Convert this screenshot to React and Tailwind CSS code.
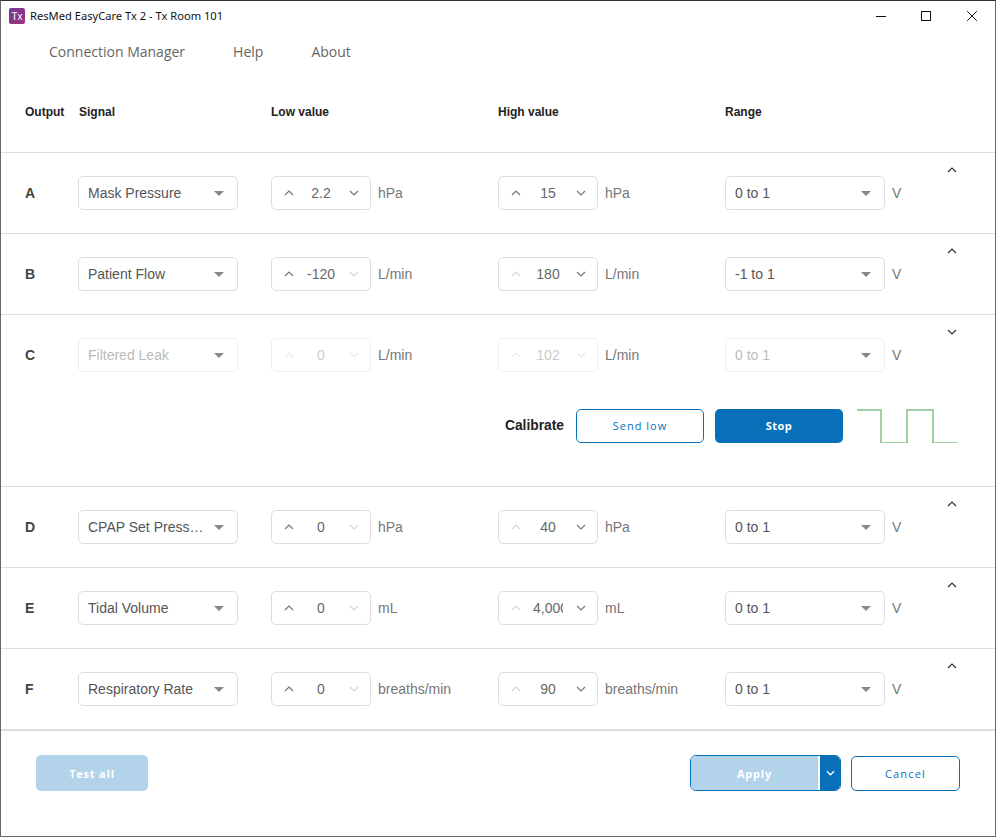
import React from 'react';

const rows = [
  { id: 'A', signal: 'Mask Pressure', low: '2.2', high: '15', unit: 'hPa', range: '0 to 1', lowUp: true, lowDown: true, highUp: true, highDown: true },
  { id: 'B', signal: 'Patient Flow', low: '-120', high: '180', unit: 'L/min', range: '-1 to 1', lowUp: true, lowDown: false, highUp: false, highDown: true },
  { id: 'C', signal: 'Filtered Leak', low: '0', high: '102', unit: 'L/min', range: '0 to 1', lowUp: false, lowDown: false, highUp: false, highDown: false, disabled: true, open: true },
  { id: 'D', signal: 'CPAP Set Pressure', low: '0', high: '40', unit: 'hPa', range: '0 to 1', lowUp: true, lowDown: false, highUp: false, highDown: true },
  { id: 'E', signal: 'Tidal Volume', low: '0', high: '4,000', unit: 'mL', range: '0 to 1', lowUp: true, lowDown: false, highUp: false, highDown: true },
  { id: 'F', signal: 'Respiratory Rate', low: '0', high: '90', unit: 'breaths/min', range: '0 to 1', lowUp: true, lowDown: false, highUp: false, highDown: true },
];

function Chevron({ up, active, className = '' }) {
  return (
    <svg width="10" height="6" viewBox="0 0 10 6" fill="none" className={`${active ? 'text-[#777777]' : 'text-[#d4d4d4]'} ${className}`}>
      <path d={up ? 'M1 5L5 1L9 5' : 'M1 1L5 5L9 1'} stroke="currentColor" strokeWidth="1.2" />
    </svg>
  );
}

function Select({ value, disabled }) {
  return (
    <div className={`flex h-[34px] w-[160px] items-center justify-between rounded-[5px] border pl-[9px] pr-[13px] text-sm ${disabled ? 'border-[#eeeeee] text-[#bbbbbb]' : 'border-[#dddddd] text-[#555555]'}`}>
      <span className="w-[116px] truncate">{value}</span>
      <span className="h-0 w-0 border-x-[5.5px] border-t-[5.5px] border-x-transparent border-t-[#888888]" />
    </div>
  );
}

function Stepper({ value, up, down, disabled, unit }) {
  return (
    <div className="flex items-center">
      <div className={`flex h-[34px] w-[100px] items-center justify-between rounded-[5px] border pl-[12px] pr-[11px] text-sm ${disabled ? 'border-[#eeeeee] text-[#cccccc]' : 'border-[#dddddd] text-[#666666]'}`}>
        <Chevron up active={up} className={disabled ? 'text-[#e8e8e8]' : ''} />
        <span className="-ml-[1px] w-[30px] overflow-hidden whitespace-nowrap text-center">{value}</span>
        <Chevron active={down} className={disabled ? 'text-[#e8e8e8]' : ''} />
      </div>
      <span className="ml-[7px] whitespace-nowrap text-sm text-[#777777]">{unit}</span>
    </div>
  );
}

function Row({ row }) {
  return (
    <div className="border-t border-[#dddddd]">
      <div className="relative flex h-[80px] items-center pl-[24px]">
        <div className="w-[53px] text-sm font-bold text-[#444444]">{row.id}</div>
        <div className="w-[193px]">
          <Select value={row.signal} disabled={row.disabled} />
        </div>
        <div className="w-[227px]">
          <Stepper value={row.low} up={row.lowUp} down={row.lowDown} disabled={row.disabled} unit={row.unit} />
        </div>
        <div className="w-[227px]">
          <Stepper value={row.high} up={row.highUp} down={row.highDown} disabled={row.disabled} unit={row.unit} />
        </div>
        <Select value={row.range} disabled={row.disabled} />
        <span className="ml-[7px] text-sm text-[#777777]">V</span>
        <Chevron up={!row.open} active className="absolute left-[946px] top-[14px] !text-[#333333]" />
      </div>
      {row.open && (
        <div className="flex h-[91px] items-start justify-end pr-[38px] pt-[14px]">
          <div className="flex items-center">
            <span className="mr-[12px] pt-[1px] text-[13.8px] font-bold text-[#222222]">Calibrate</span>
            <button type="button" className="h-[34px] w-[128px] rounded-[5px] border border-[#0770b8] bg-white font-['Open_Sans',sans-serif] text-[11px] tracking-[1px] text-[#0770b8]">
              Send low
            </button>
            <button type="button" className="ml-[11px] h-[34px] w-[128px] rounded-[5px] bg-[#0770b8] font-['Open_Sans',sans-serif] text-[11px] font-bold tracking-[0.5px] text-white">
              Stop
            </button>
            <svg width="100" height="34" viewBox="0 0 100 34" fill="none" className="ml-[14px]">
              <path d="M0 1H24V34H50V1H76V34H100" stroke="#7fc285" strokeWidth="1.5" />
            </svg>
          </div>
        </div>
      )}
    </div>
  );
}

function App() {
  return (
    <div className="flex h-[837px] w-[996px] flex-col border border-t-[#333333] border-x-[#666666] border-b-[#666666] bg-white font-['Liberation_Sans',Arial,sans-serif]">
      {/* Window title bar */}
      <div className="flex h-[30px] items-center pl-[8px]">
        <div className="flex h-[16px] w-[16px] items-center justify-center rounded-[2px] bg-gradient-to-br from-[#6d3a8f] to-[#a0307f] text-[10px] text-white">
          Tx
        </div>
        <span className="ml-[5px] font-['Noto_Sans',sans-serif] text-[11.15px] text-[#111111]">ResMed EasyCare Tx 2 - Tx Room 101</span>
        <div className="ml-auto flex items-center pr-[18px] text-[#111111]">
          <svg width="10" height="10" viewBox="0 0 10 10" className="mr-[35px]"><path d="M0 5.5H10" stroke="currentColor" /></svg>
          <svg width="10" height="10" viewBox="0 0 10 10" className="mr-[36px]"><rect x="0.5" y="0.5" width="9" height="9" fill="none" stroke="currentColor" /></svg>
          <svg width="10" height="10" viewBox="0 0 10 10"><path d="M0 0L10 10M10 0L0 10" stroke="currentColor" strokeWidth="0.9" /></svg>
        </div>
      </div>

      {/* Menu */}
      <nav className="flex h-[41px] items-center pl-[48px] font-['Open_Sans',sans-serif] text-sm text-[#666666]">
        <span className="mr-[48px]">Connection Manager</span>
        <span className="mr-[48px]">Help</span>
        <span>About</span>
      </nav>

      {/* Column headings */}
      <div className="flex h-[80px] items-center pl-[24px] text-xs font-bold text-[#222222]">
        <div className="w-[53px]">Output</div>
        <div className="w-[193px] pl-[1px]">Signal</div>
        <div className="w-[227px]">Low value</div>
        <div className="w-[227px]">High value</div>
        <div>Range</div>
      </div>

      {rows.map((row) => (
        <Row key={row.id} row={row} />
      ))}

      {/* Footer */}
      <div className="flex flex-1 items-start justify-between border-t-2 border-[#dddddd] pl-[35px] pr-[35px] pt-[24px]">
        <button type="button" className="h-[36px] w-[112px] rounded-[5px] bg-[#b3d3ea] pt-[2px] font-['Open_Sans',sans-serif] text-[11px] font-bold tracking-[0.8px] text-white">
          Test all
        </button>
        <div className="flex items-center">
          <div className="flex h-[36px] w-[151px] overflow-hidden rounded-[6px] border border-[#0770b8]">
            <button type="button" className="w-[129px] border-r-2 border-white bg-[#b3d3ea] pt-[2px] font-['Open_Sans',sans-serif] text-[11px] font-bold tracking-[0.8px] text-white">
              Apply
            </button>
            <div className="flex flex-1 items-center justify-center bg-[#0770b8]">
              <svg width="9" height="6" viewBox="0 0 10 6" fill="none"><path d="M1 1L5 5L9 1" stroke="white" strokeWidth="1.4" /></svg>
            </div>
          </div>
          <button type="button" className="ml-[10px] mt-[1px] h-[35px] w-[109px] rounded-[5px] border border-[#0770b8] bg-white pt-[1px] font-['Open_Sans',sans-serif] text-[11px] tracking-[1.2px] text-[#0770b8]">
            Cancel
          </button>
        </div>
      </div>
    </div>
  );
}

export default App;
